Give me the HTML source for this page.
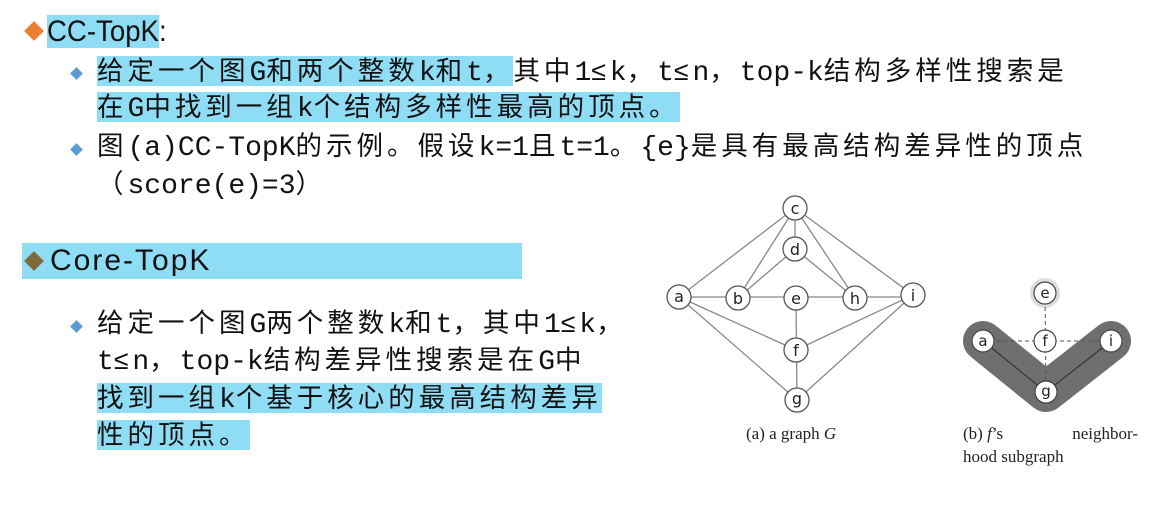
<!DOCTYPE html>
<html><head><meta charset="utf-8"><style>
body{margin:0;width:1152px;height:516px;background:#fff;position:relative;overflow:hidden;font-family:"Liberation Sans","Noto Sans CJK SC",sans-serif;color:#111}
.t{position:absolute;white-space:nowrap;font-size:26.5px;line-height:34px;letter-spacing:4px}
.t i{font-style:normal;font-family:"Liberation Mono",monospace;letter-spacing:0;font-size:28px;line-height:28px}
.hl{background:#8fdcf5}
.d{position:absolute;width:9px;height:9px;background:#5b9bd5;transform:rotate(45deg)}
.D{position:absolute;width:14px;height:14px;transform:rotate(45deg)}
</style></head><body>
<div class="D" style="left:27px;top:24px;background:#ed7d31"></div>
<div class="t" style="left:47px;top:13px;font-size:30px;line-height:38px;letter-spacing:0;transform:scaleX(0.92);transform-origin:left"><span class="hl">CC-TopK</span>:</div>
<div class="d" style="left:72px;top:69px"></div>
<div class="t" style="left:97px;top:54px"><span class="hl">给定一个图<i>G</i>和两个整数<i>k</i>和<i>t</i>，</span>其中<i>1</i>≤<i>k</i>，<i>t</i>≤<i>n</i>，<i>top-k</i>结构多样性搜索是</div>
<div class="t" style="left:97px;top:90px"><span class="hl">在<i>G</i>中找到一组<i>k</i>个结构多样性最高的顶点。</span></div>
<div class="d" style="left:72px;top:145px"></div>
<div class="t" style="left:97px;top:129px">图<i>(a)CC-TopK</i>的示例。假设<i>k=1</i>且<i>t=1</i>。<i>{e}</i>是具有最高结构差异性的顶点</div>
<div class="t" style="left:97px;top:167px">（<i>score(e)=3</i>）</div>
<div style="position:absolute;left:22px;top:243px;width:500px;height:36px;background:#8fdcf5"></div>
<div class="D" style="left:27px;top:254px;background:#7f6a3a"></div>
<div class="t" style="left:50px;top:242px;font-size:30px;line-height:38px;letter-spacing:2px">Core-TopK</div>
<div class="d" style="left:72px;top:322px"></div>
<div class="t" style="left:97px;top:306px">给定一个图<i>G</i>两个整数<i>k</i>和<i>t</i>，其中<i>1</i>≤<i>k</i>，</div>
<div class="t" style="left:97px;top:343px"><i>t</i>≤<i>n</i>，<i>top-k</i>结构差异性搜索是在<i>G</i>中</div>
<div class="t" style="left:97px;top:381px"><span class="hl">找到一组<i>k</i>个基于核心的最高结构差异</span></div>
<div class="t" style="left:97px;top:418px"><span class="hl">性的顶点。</span></div>
<svg style="position:absolute;left:0;top:0" width="1152" height="516">
<g stroke="#888" stroke-width="1.3" fill="none">
<line x1="795" y1="208" x2="679" y2="297"/><line x1="795" y1="208" x2="738" y2="298"/><line x1="795" y1="208" x2="795" y2="249"/><line x1="795" y1="208" x2="855" y2="298"/><line x1="795" y1="208" x2="913" y2="295"/>
<line x1="795" y1="249" x2="738" y2="298"/><line x1="795" y1="249" x2="855" y2="298"/>
<line x1="679" y1="297" x2="913" y2="297"/><line x1="796" y1="298" x2="797" y2="400"/>
<line x1="679" y1="297" x2="796" y2="350"/><line x1="679" y1="297" x2="797" y2="400"/><line x1="913" y1="295" x2="796" y2="350"/><line x1="913" y1="295" x2="797" y2="400"/>
</g>
<g stroke="#555" stroke-width="1.3" fill="#fff">
<circle cx="795" cy="208" r="12"/><circle cx="795" cy="249" r="12"/><circle cx="679" cy="297" r="12"/><circle cx="738" cy="298" r="12"/><circle cx="796" cy="298" r="12"/><circle cx="855" cy="298" r="12"/><circle cx="913" cy="295" r="12"/><circle cx="796" cy="350" r="12"/><circle cx="797" cy="400" r="12"/>
</g>
<g font-family="DejaVu Sans,sans-serif" font-size="16" text-anchor="middle" fill="#222">
<text x="795" y="214">c</text><text x="795" y="255">d</text><text x="679" y="302">a</text><text x="738" y="304">b</text><text x="796" y="304">e</text><text x="855" y="304">h</text><text x="913" y="301">i</text><text x="796" y="356">f</text><text x="797" y="404">g</text>
</g>
<path d="M983 341 L1046 392 L1111 341" stroke="#6f6f6f" stroke-width="40" stroke-linecap="round" stroke-linejoin="round" fill="none"/>
<circle cx="1045" cy="293" r="15" fill="#ddd"/>
<g stroke="#555" stroke-width="1" stroke-dasharray="4,3"><line x1="983" y1="341" x2="1111" y2="341"/><line x1="1045" y1="293" x2="1046" y2="392"/></g>
<path d="M983 341 L1046 392 L1111 341" stroke="#333" stroke-width="1.2" fill="none"/>
<g stroke="#444" stroke-width="1.2" fill="#fff">
<circle cx="1045" cy="293" r="11"/><circle cx="983" cy="341" r="11"/><circle cx="1045" cy="341" r="11"/><circle cx="1111" cy="341" r="11"/><circle cx="1046" cy="392" r="11"/>
</g>
<g font-family="DejaVu Sans,sans-serif" font-size="15" text-anchor="middle" fill="#222">
<text x="1045" y="298">e</text><text x="983" y="346">a</text><text x="1045" y="346">f</text><text x="1111" y="346">i</text><text x="1046" y="396">g</text>
</g>
<g font-family="Liberation Serif,serif" font-size="17" fill="#222">
<text x="746" y="439">(a) a graph <tspan font-style="italic">G</tspan></text>
<text x="963" y="439">(b)  <tspan font-style="italic">f</tspan>’s</text><text x="1138" y="439" text-anchor="end">neighbor-</text>
<text x="963" y="462">hood subgraph</text>
</g>
</svg>
</body></html>
